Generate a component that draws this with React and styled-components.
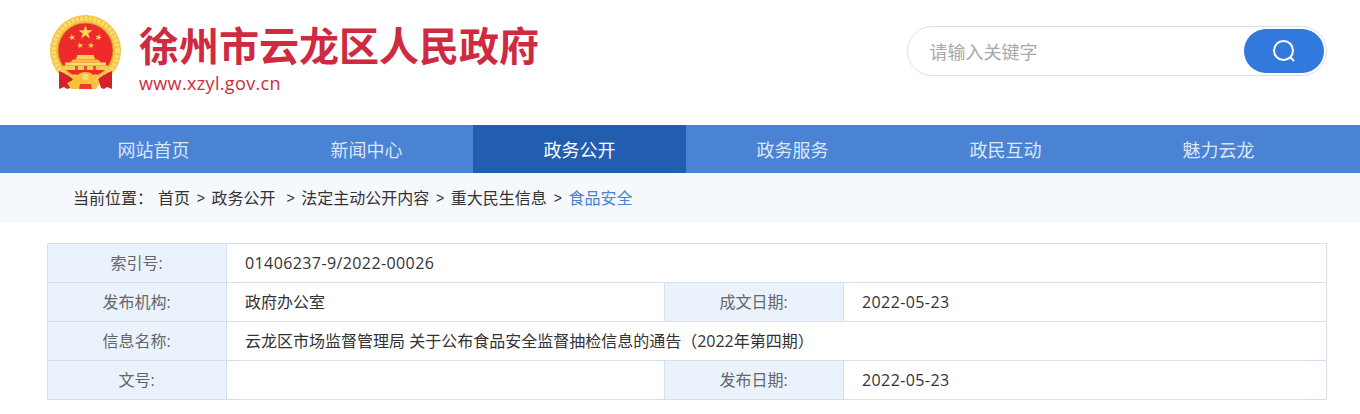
import React from "react";
import styled, { createGlobalStyle } from "styled-components";

const Global = createGlobalStyle`
  html, body { margin: 0; padding: 0; background: #fff; }
  body { font-family: "Open Sans", "Noto Sans CJK SC", sans-serif; color: #333; overflow: hidden; }
`;

const Container = styled.div`
  width: 1280px;
  margin-left: 47px;
  box-sizing: border-box;
`;

const Header = styled.header`
  height: 125px;
`;
const HeaderInner = styled(Container)`
  height: 100%;
  display: flex;
  align-items: flex-start;
  justify-content: space-between;
`;
const Brand = styled.div`
  display: flex;
  align-items: flex-start;
  padding-top: 13px;
`;
const Emblem = styled.svg`
  width: 78px;
  height: 82px;
  margin-right: 14px;
  flex: none;
`;
const BrandText = styled.div`
  display: flex;
  flex-direction: column;
  padding-top: 7px;
`;
const SiteTitle = styled.h1`
  margin: 0;
  font: 700 40px/48px "Noto Sans CJK SC", sans-serif;
  color: #d02a40;
  white-space: nowrap;
`;
const SiteUrl = styled.div`
  margin-top: 3px;
  font-size: 18px;
  line-height: 24px;
  letter-spacing: 0.35px;
  color: #d02a40;
`;

const Search = styled.form`
  margin-top: 26px;
  width: 420px;
  height: 50px;
  box-sizing: border-box;
  border: 1px solid #d8e0ec;
  border-radius: 25px;
  display: flex;
  align-items: center;
  justify-content: space-between;
  padding: 0 2px 0 21.5px;
`;
const SearchHint = styled.span`
  font: 18px/24px "Noto Sans CJK SC", sans-serif;
  color: #a8a8a8;
`;
const SearchButton = styled.button`
  width: 80px;
  height: 44px;
  border: 0;
  padding: 0;
  border-radius: 22px;
  background: #3179dc;
  display: flex;
  align-items: center;
  justify-content: center;
`;

const Nav = styled.nav`
  height: 48px;
  background: #4a82d4;
`;
const NavInner = styled(Container)`
  display: grid;
  grid-template-columns: repeat(6, 213px);
`;
const NavItem = styled.a`
  height: 48px;
  display: flex;
  align-items: center;
  justify-content: center;
  font: 18px/24px "Noto Sans CJK SC", sans-serif;
  color: ${(p) => (p.$active ? "#fff" : "#dbe7f8")};
  background: ${(p) => (p.$active ? "#215eb0" : "transparent")};
`;

const CrumbBand = styled.div`
  height: 50px;
  background: #f5f8fd;
`;
const CrumbInner = styled(Container)`
  height: 100%;
  display: flex;
  align-items: center;
  padding: 0 0 2px 26px;
  font: 16px/24px "Noto Sans CJK SC", sans-serif;
  color: #333;
`;
const CrumbLead = styled.span`
  width: 85px;
  flex: none;
`;
const Crumb = styled.span`
  color: ${(p) => (p.$current ? "#4a82d4" : "#333")};
  margin-right: ${(p) => (p.$loose ? "4px" : "0")};
`;
const Sep = styled.span`
  width: 8px;
  margin: 2px 6.8px 0;
  font: 14px/24px "Liberation Sans", sans-serif;
  text-align: center;
`;

const InfoTable = styled.table`
  width: 1280px;
  margin: 20px 0 0 47px;
  border-collapse: collapse;
  table-layout: fixed;
  font: 16px/24px "Open Sans", "Noto Sans CJK SC", sans-serif;
`;
const Label = styled.th`
  height: 38px;
  padding: 0 1px 0 0;
  border: 1px solid #d6e0ec;
  background: #eaf2fc;
  font-weight: 400;
  color: #666;
  text-align: center;
`;
const Value = styled.td`
  height: 38px;
  padding: 0 0 0 18px;
  border: 1px solid #d6e0ec;
  color: #333;
  letter-spacing: ${(p) => (p.$num ? "0.4px" : "0")};
`;

const EmblemArt = () => {
  const star = (cx, cy, r, rot = 0) => {
    const pts = [];
    for (let i = 0; i < 10; i++) {
      const rad = i % 2 ? r * 0.382 : r;
      const a = ((-90 + rot + i * 36) * Math.PI) / 180;
      pts.push(`${(cx + rad * Math.cos(a)).toFixed(2)},${(cy + rad * Math.sin(a)).toFixed(2)}`);
    }
    return <polygon points={pts.join(" ")} fill="#fbd85a" />;
  };
  return (
    <Emblem viewBox="47 13 78 82" aria-hidden="true">
      <circle cx="85.5" cy="50.5" r="35.5" fill="#f4c33c" />
      <circle cx="85.5" cy="50.5" r="32" fill="none" stroke="#fbdc74" strokeWidth="4.5" strokeDasharray="3 1.4" />
      <circle cx="85.5" cy="50.5" r="27.5" fill="#ee2b2a" stroke="#c99a2a" strokeWidth="0.8" />
      {star(85.5, 32.5, 7.5)}
      {star(72, 37.5, 3.6, -15)}
      {star(98.5, 37.5, 3.6, 15)}
      {star(80, 45.5, 3.4, -10)}
      {star(91, 45.5, 3.4, 10)}
      <path d="M77 55h17v1.5l1.5 3h-20l1.5-3z" fill="#fad25a" />
      <path d="M73 59.5h25l3 3H70z" fill="#f6bf3c" />
      <rect x="65" y="62.5" width="41" height="3" fill="#fbdc74" />
      <path d="M63 65.5h45v4.5H63z" fill="#f8cc50" />
      <path d="M75 66h3v4h-3zM84 66h3v4h-3zM93 66h3v4h-3z" fill="#e8503a" />
      <path d="M59 71c6 2 10 5 14 8l-3 9-3 1-3-2-5 2z" fill="#d8202a" />
      <path d="M112 71c-6 2-10 5-14 8l3 9 3 1 3-2 5 2z" fill="#d8202a" />
      <path d="M72 76c2-2 4-2 6-1 2-4 13-4 15 0 2-1 4-1 6 1l-5 4 6 3-4 6h-7l-4-3-3 0-4 3h-7l-4-6 6-3z" fill="#f5c23a" />
      <circle cx="85.5" cy="77" r="3.2" fill="#fbdc74" />
      <path d="M80 84h11l1 5H79z" fill="#ee3a2f" />
    </Emblem>
  );
};

const menu = ["网站首页", "新闻中心", "政务公开", "政务服务", "政民互动", "魅力云龙"];

export default function App() {
  return (
    <>
      <Global />
      <Header>
        <HeaderInner>
          <Brand>
            <EmblemArt />
            <BrandText>
              <SiteTitle>徐州市云龙区人民政府</SiteTitle>
              <SiteUrl>www.xzyl.gov.cn</SiteUrl>
            </BrandText>
          </Brand>
          <Search>
            <SearchHint>请输入关键字</SearchHint>
            <SearchButton type="button" aria-label="搜索">
              <svg width="24" height="24" viewBox="0 0 24 24" fill="none" stroke="#fff" strokeWidth="2" strokeLinecap="round">
                <circle cx="11.5" cy="11.5" r="9.5" />
                <path d="M18.5 18.5l3 3" />
              </svg>
            </SearchButton>
          </Search>
        </HeaderInner>
      </Header>
      <Nav>
        <NavInner>
          {menu.map((t) => (
            <NavItem key={t} $active={t === "政务公开"}>{t}</NavItem>
          ))}
        </NavInner>
      </Nav>
      <CrumbBand>
        <CrumbInner>
          <CrumbLead>当前位置：</CrumbLead>
          <Crumb>首页</Crumb>
          <Sep>&gt;</Sep>
          <Crumb $loose>政务公开</Crumb>
          <Sep>&gt;</Sep>
          <Crumb>法定主动公开内容</Crumb>
          <Sep>&gt;</Sep>
          <Crumb>重大民生信息</Crumb>
          <Sep>&gt;</Sep>
          <Crumb $current>食品安全</Crumb>
        </CrumbInner>
      </CrumbBand>
      <InfoTable>
        <colgroup>
          <col style={{ width: 179 }} />
          <col style={{ width: 438 }} />
          <col style={{ width: 179 }} />
          <col />
        </colgroup>
        <tbody>
          <tr>
            <Label>索引号:</Label>
            <Value colSpan={3} $num>01406237-9/2022-00026</Value>
          </tr>
          <tr>
            <Label>发布机构:</Label>
            <Value>政府办公室</Value>
            <Label>成文日期:</Label>
            <Value $num>2022-05-23</Value>
          </tr>
          <tr>
            <Label>信息名称:</Label>
            <Value colSpan={3}>云龙区市场监督管理局 关于公布食品安全监督抽检信息的通告（2022年第四期）</Value>
          </tr>
          <tr>
            <Label>文号:</Label>
            <Value />
            <Label>发布日期:</Label>
            <Value $num>2022-05-23</Value>
          </tr>
        </tbody>
      </InfoTable>
    </>
  );
}
